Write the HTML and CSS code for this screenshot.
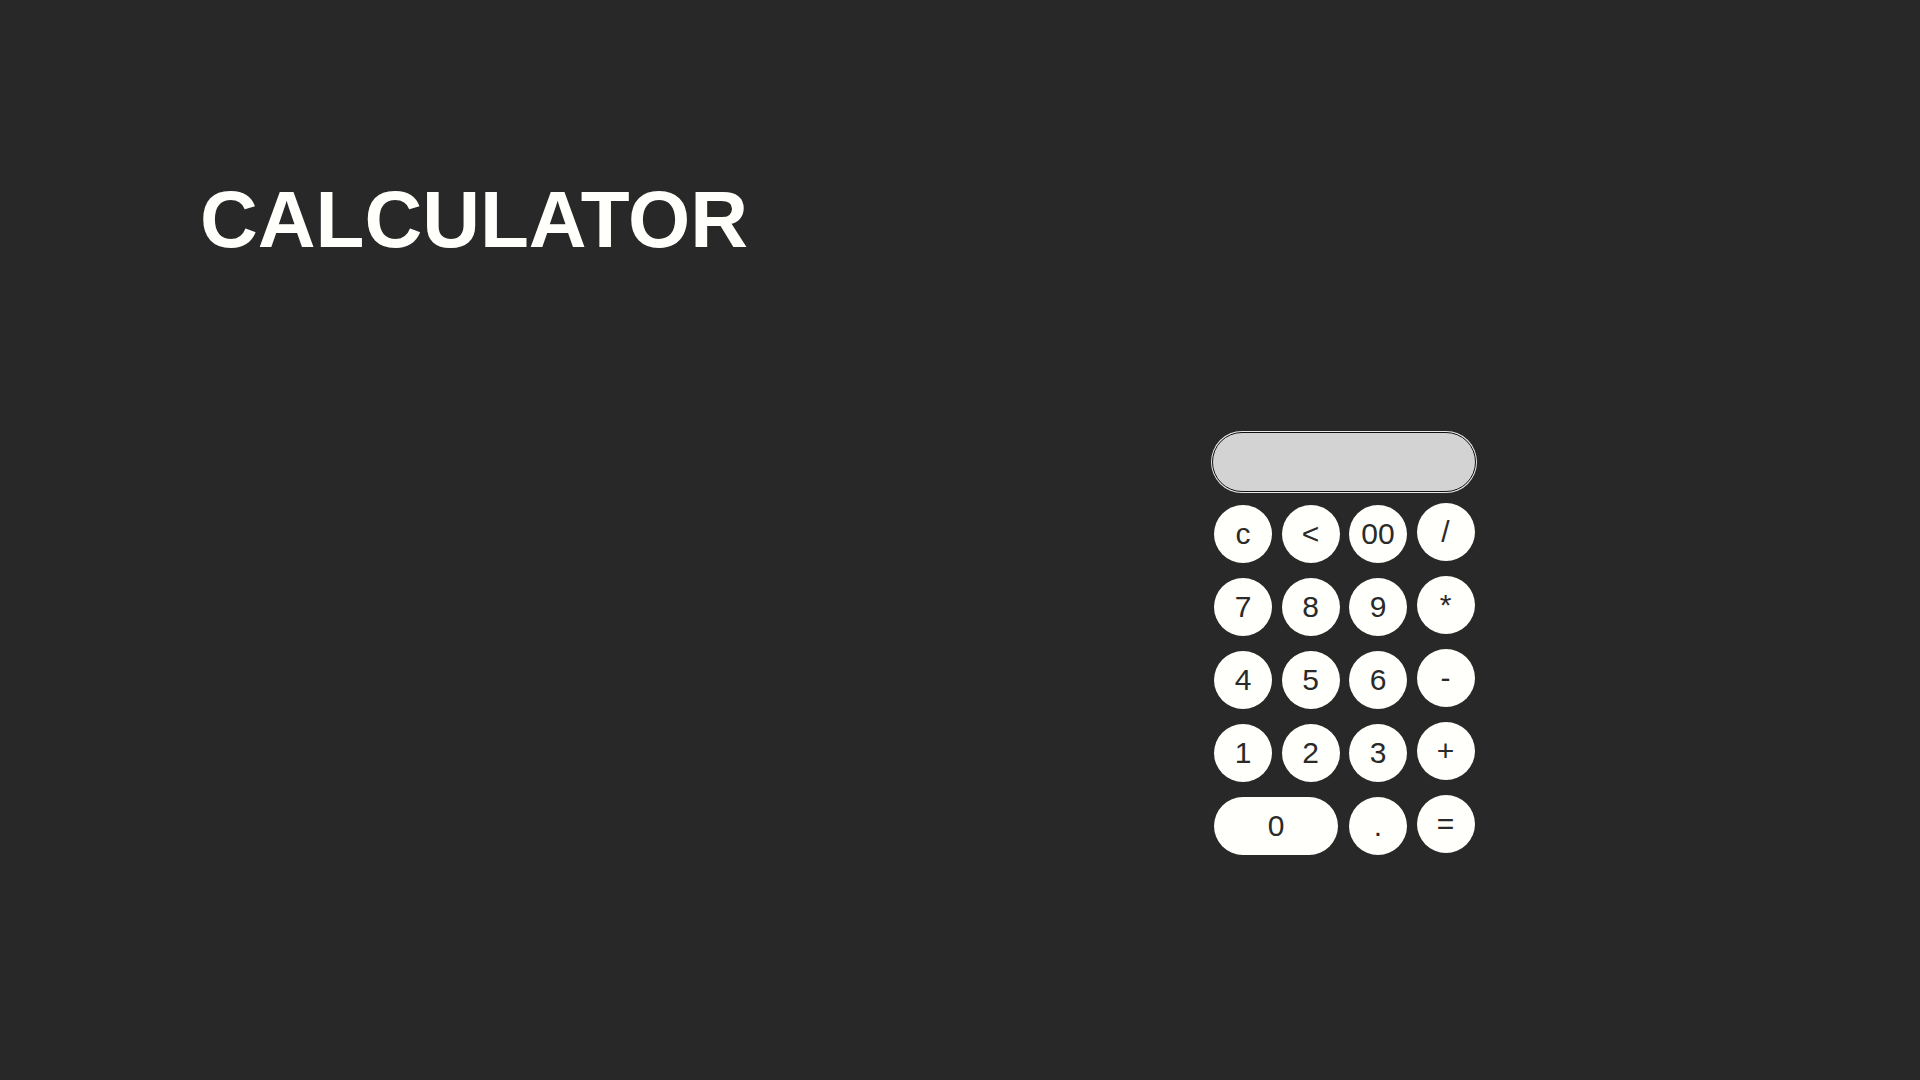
FILE: index.html
```html
<!DOCTYPE html>
<html lang="en">
<head>
<meta charset="utf-8">
<title>Calculator</title>
<link rel="stylesheet" href="styles.css">
</head>
<body>
<main class="page">
  <h1 class="title">CALCULATOR</h1>
  <section class="calc">
    <div class="display"></div>
    <div class="keys">
      <button class="key">c</button>
      <button class="key">&lt;</button>
      <button class="key">00</button>
      <button class="key op">/</button>
      <button class="key">7</button>
      <button class="key">8</button>
      <button class="key">9</button>
      <button class="key op">*</button>
      <button class="key">4</button>
      <button class="key">5</button>
      <button class="key">6</button>
      <button class="key op">-</button>
      <button class="key">1</button>
      <button class="key">2</button>
      <button class="key">3</button>
      <button class="key op">+</button>
      <button class="key wide">0</button>
      <button class="key">.</button>
      <button class="key op">=</button>
    </div>
  </section>
</main>
</body>
</html>
```

FILE: styles.css
```css
html, body {
  margin: 0;
  padding: 0;
  background: #282828;
  height: 100%;
}

.page {
  display: grid;
  grid-template-columns: 1012px auto;
  padding-left: 200px;
  min-height: 1080px;
  box-sizing: border-box;
  align-items: start;
}

.title {
  margin: 0;
  padding-top: 174px;
  font-family: "Liberation Sans", Arial, sans-serif;
  font-weight: 700;
  font-size: 80px;
  line-height: 92px;
  color: #fffffb;
}

.calc {
  margin-top: 432px;
  width: 264px;
  display: flex;
  flex-direction: column;
  gap: 13px;
}

.display {
  box-sizing: border-box;
  width: 264px;
  height: 60px;
  border-radius: 30px;
  background: #d3d3d3;
  border: 1px solid #111;
  box-shadow: 0 0 0 1px #e8e8e8;
}

.keys {
  display: grid;
  grid-template-columns: repeat(4, 58px);
  grid-auto-rows: 58px;
  column-gap: 9.5px;
  row-gap: 15px;
  padding-left: 2px;
}

.key {
  box-sizing: border-box;
  width: 58px;
  height: 58px;
  border: none;
  border-radius: 29px;
  background: #fffffb;
  color: #2a2a2a;
  font-family: "Liberation Sans", Arial, sans-serif;
  font-size: 30px;
  padding: 0;
  display: flex;
  align-items: center;
  justify-content: center;
}

.op {
  margin-top: -2px;
}

.wide {
  grid-column: span 2;
  width: 124px;
}
```
